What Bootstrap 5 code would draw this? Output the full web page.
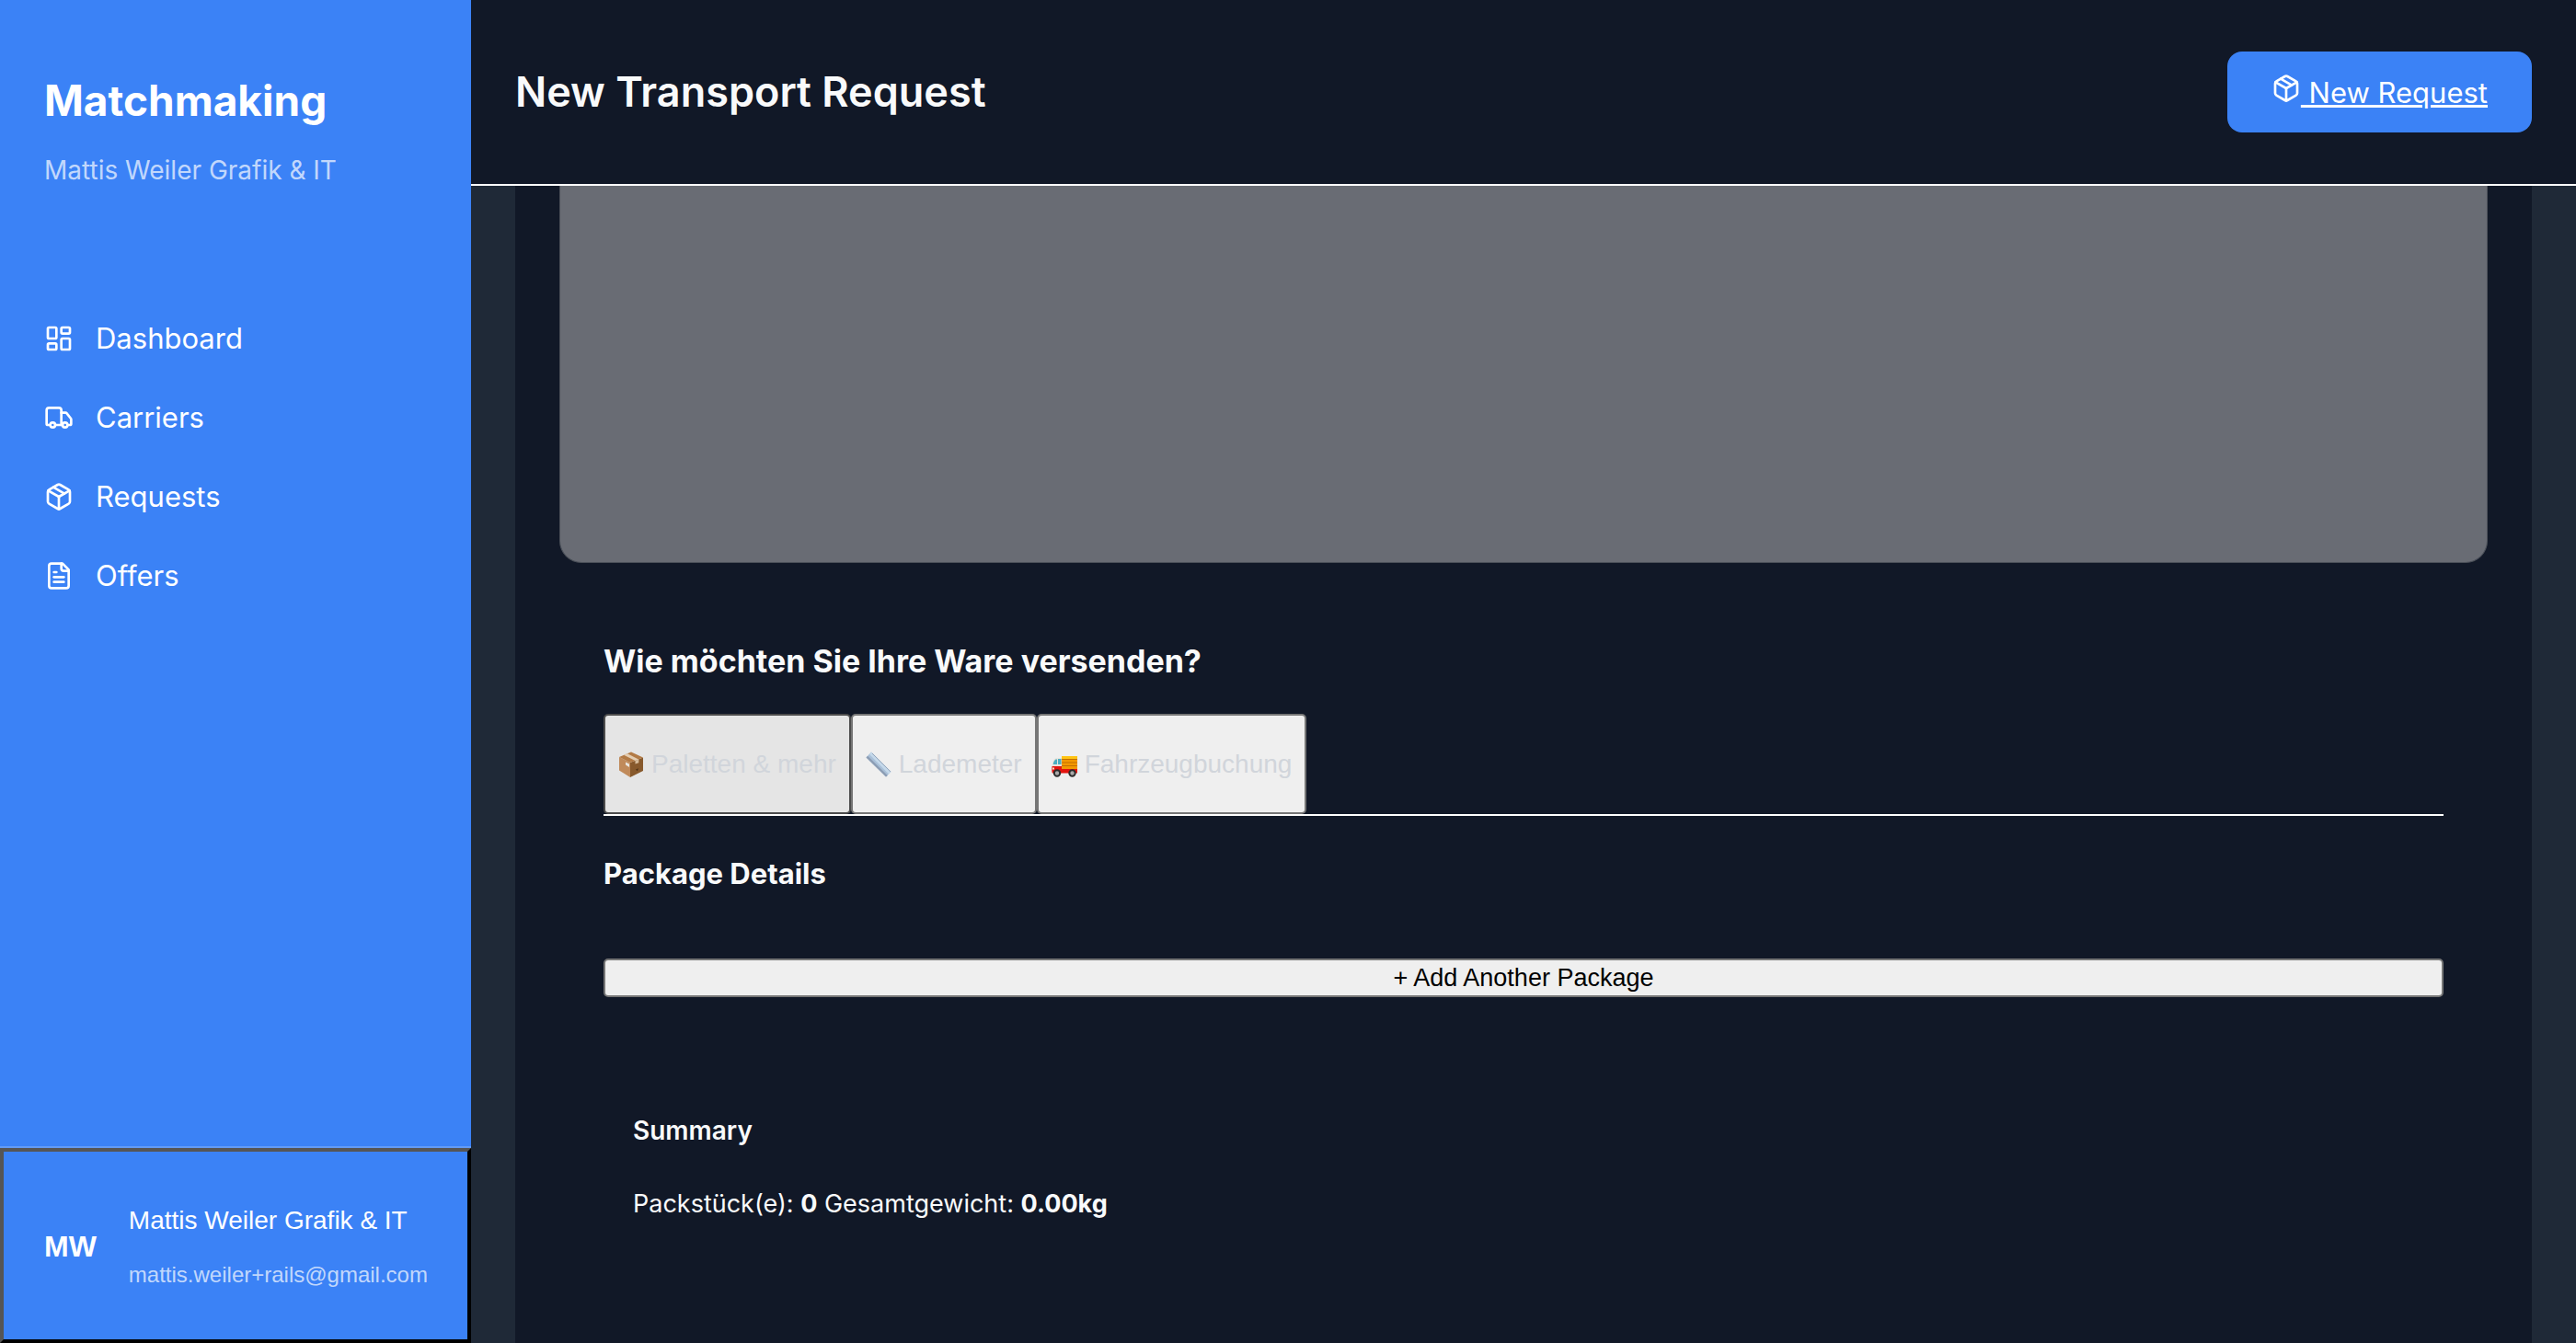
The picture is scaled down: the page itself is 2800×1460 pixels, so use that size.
<!DOCTYPE html>
<html lang="de">
<head>
<meta charset="utf-8">
<meta name="viewport" content="width=device-width, initial-scale=1">
<title>New Transport Request</title>
<link href="https://cdn.jsdelivr.net/npm/bootstrap@5.3.0/dist/css/bootstrap.min.css" rel="stylesheet">
<style>
:root{--brand:#3b82f6;--ink:#111827;--page:#1f2937;--paper:#f9fafb}
body{font-family:Inter,sans-serif;font-size:28px;line-height:40px;color:var(--paper);background:var(--page)}
button{font-family:"Liberation Sans",Arial,sans-serif}
.sidebar{width:512px;background:var(--brand);color:#fff}
.brand-block{padding:80px 48px 0}
.brand-name{font-size:46px;line-height:58px;font-weight:700;margin-bottom:27px}
.muted-text{color:rgba(255,255,255,.7)}
.side-nav{margin-top:120px}
.side-nav .nav-link{padding:24px 48px;gap:24px;font-size:31px;line-height:38px;color:#fff}
.icon{width:32px;height:32px;fill:none;stroke:currentColor;stroke-width:2;stroke-linecap:round;stroke-linejoin:round;flex:none}
.user-area{border-top:2px solid rgba(255,255,255,.2)}
.user-button{height:212px;padding:2px 16px 0 44px;gap:35px;border:4px outset #000;border-color:#555 #000 #000 #555;background:var(--brand);color:#fff}
.user-initials{font-size:32px;font-weight:700}
.user-name{font-size:28px;line-height:44px}
.user-mail{font-size:24px;line-height:38px}
.user-lines{gap:18px}
.topbar{height:202px;padding:0 48px;background:var(--ink);border-bottom:2px solid #fff}
.page-title{font-size:45px;line-height:58px;font-weight:600}
.new-request{padding:24px 48px;border-radius:16px;background:var(--brand);color:#fff;font-size:31px;line-height:39px;text-decoration:underline;text-decoration-thickness:3px;text-underline-offset:2px}
.new-request:hover{color:#fff}
.new-request .icon{vertical-align:baseline}
.request-panel{margin:0 48px;padding:0 48px;background:var(--ink)}
.map-box{height:410px;flex:none;background:#696c74;border:1px solid #4b5059;border-top:0;border-radius:0 0 24px 24px}
.request-form{padding:86px 48px 0}
.form-title{font-size:34px;line-height:42px;font-weight:700;margin-bottom:36px}
.mode-tabs{border-bottom:2px solid #fff;margin-bottom:43px}
.plain-button{border:2px solid #767676;border-radius:5px;background:#efefef;color:#000}
.mode-tab{height:109px;padding:0 14px;gap:8px;font-size:28px;color:#d1d5db}
.mode-tab.active{background:#e5e5e5;border-color:#4c4c4c}
.mode-tab svg{width:28px;height:28px;flex:none}
.section-title{font-size:31px;line-height:40px;font-weight:700;margin-bottom:72px}
.add-button{height:42px;padding:0;font-size:27px;line-height:38px}
.summary-box{padding:125px 32px 48px}
.summary-title{font-size:28px;line-height:40px;font-weight:600;margin-bottom:40px}
.summary-line{font-size:27px}
</style>
</head>
<body>
<svg class="d-none" aria-hidden="true">
  <symbol id="i-box" viewBox="0 0 24 24"><path d="m7.5 4.27 9 5.15"/><path d="M21 8a2 2 0 0 0-1-1.73l-7-4a2 2 0 0 0-2 0l-7 4A2 2 0 0 0 3 8v8a2 2 0 0 0 1 1.73l7 4a2 2 0 0 0 2 0l7-4A2 2 0 0 0 21 16Z"/><path d="m3.3 7 8.7 5 8.7-5"/><path d="M12 22V12"/></symbol>
</svg>
<div class="d-flex vh-100 overflow-hidden">
  <aside class="sidebar d-flex flex-column flex-shrink-0">
    <div class="brand-block">
      <div class="brand-name">Matchmaking</div>
      <div class="muted-text">Mattis Weiler Grafik &amp; IT</div>
    </div>
    <nav class="side-nav nav flex-column">
      <a class="nav-link d-flex align-items-center" href="#">
        <svg class="icon" viewBox="0 0 24 24" aria-hidden="true"><rect x="3" y="3" width="7" height="9" rx="1"/><rect x="14" y="3" width="7" height="5" rx="1"/><rect x="14" y="12" width="7" height="9" rx="1"/><rect x="3" y="16" width="7" height="5" rx="1"/></svg>
        Dashboard</a>
      <a class="nav-link d-flex align-items-center" href="#">
        <svg class="icon" viewBox="0 0 24 24" aria-hidden="true"><path d="M14 18V6a2 2 0 0 0-2-2H4a2 2 0 0 0-2 2v11a1 1 0 0 0 1 1h2"/><path d="M15 18H9"/><path d="M19 18h2a1 1 0 0 0 1-1v-3.65a1 1 0 0 0-.22-.62l-3.48-4.35A1 1 0 0 0 17.52 8H14"/><circle cx="17" cy="18" r="2"/><circle cx="7" cy="18" r="2"/></svg>
        Carriers</a>
      <a class="nav-link d-flex align-items-center" href="#">
        <svg class="icon" aria-hidden="true"><use href="#i-box"/></svg>
        Requests</a>
      <a class="nav-link d-flex align-items-center" href="#">
        <svg class="icon" viewBox="0 0 24 24" aria-hidden="true"><path d="M15 2H6a2 2 0 0 0-2 2v16a2 2 0 0 0 2 2h12a2 2 0 0 0 2-2V7Z"/><path d="M14 2v4a2 2 0 0 0 2 2h4"/><path d="M10 9H8"/><path d="M16 13H8"/><path d="M16 17H8"/></svg>
        Offers</a>
    </nav>
    <div class="user-area mt-auto">
      <button type="button" class="user-button w-100 d-flex align-items-center text-start">
        <span class="user-initials">MW</span>
        <span class="user-lines d-flex flex-column">
          <span class="user-name">Mattis Weiler Grafik &amp; IT</span>
          <span class="user-mail muted-text">mattis.weiler+rails@gmail.com</span>
        </span>
      </button>
    </div>
  </aside>
  <div class="d-flex flex-column flex-grow-1">
    <header class="topbar d-flex align-items-center justify-content-between flex-shrink-0">
      <h1 class="page-title mb-0">New Transport Request</h1>
      <a class="new-request" href="#"><svg class="icon" aria-hidden="true"><use href="#i-box"/></svg> New Request</a>
    </header>
    <main class="request-panel d-flex flex-column flex-grow-1 overflow-hidden">
      <div class="map-box"></div>
      <form class="request-form">
        <h2 class="form-title">Wie möchten Sie Ihre Ware versenden?</h2>
        <div class="mode-tabs d-flex">
          <button type="button" class="plain-button mode-tab active d-flex align-items-center">
            <svg viewBox="0 0 28 28" aria-hidden="true"><path fill="#c08a5a" d="M1 6 13 12V28L1 20.500Z"/><path fill="#87592c" d="M13 12 27 6.500V21L13 28Z"/><path fill="#b27a45" d="M14 .5 27 6.500 13 12 1 6Z"/><path fill="#e3cdb2" d="m6 3.700 3.500-1.600L22 8.500 18.500 9.900Z"/><path fill="#d6bc9c" d="m18.500 9.900 3.800-1.500v3.800l-3.800 1.400Z"/><path fill="#e9e5df" d="m8 11.500 4 2v3.500l-4-2.500Z"/><path fill="#4e3114" d="m19 19.500 3-1.200-1.200 3Z"/></svg>
            Paletten &amp; mehr</button>
          <button type="button" class="plain-button mode-tab d-flex align-items-center">
            <svg viewBox="0 0 28 28" aria-hidden="true"><path fill="#a9c0d8" d="M.5 6.500 6 .5 27.500 22 22 27.500Z"/><path fill="#c4d8ea" d="M4 3 6 .5 27.500 22 25 24.500Z"/><path fill="#8c9db4" d="M.5 6.500 2.200 4.700 23.800 26 22 27.500Z"/><path stroke="#8799b0" stroke-width=".8" d="m7 2 20 20"/></svg>
            Lademeter</button>
          <button type="button" class="plain-button mode-tab d-flex align-items-center">
            <svg viewBox="0 0 28 28" aria-hidden="true"><path fill="#f39800" d="M11 5h17v15H11Z"/><path fill="#ffc414" d="M11 5h17v3H11Z"/><path stroke="#c46f00" d="M11 8.500h17M11 12h17M11 15.500h17"/><path fill="#e8e4dc" d="M5 7h6v9H.5C1 11 2 8 5 7Z"/><path fill="#49aec2" d="M4.500 8.500H6V14H1.700C2 11.500 3 9.500 4.500 8.500ZM7 8h3.500v6H7Z"/><path fill="#e3140f" d="M.5 16H11v3h17v4.500H1Q0 23 .5 16Z"/><path fill="#f8d7c0" d="M1 17.500h2v2H1Z"/><g fill="#a9a9a9" stroke="#2d2d2d" stroke-width="2"><circle cx="6" cy="23.500" r="3.200"/><circle cx="22.500" cy="23.500" r="3.200"/></g></svg>
            Fahrzeugbuchung</button>
        </div>
        <h3 class="section-title">Package Details</h3>
        <button type="button" class="plain-button add-button d-block w-100">+ Add Another Package</button>
        <div class="summary-box">
          <h4 class="summary-title">Summary</h4>
          <p class="summary-line mb-0">Packstück(e): <strong>0</strong> Gesamtgewicht: <strong>0.00kg</strong></p>
        </div>
      </form>
    </main>
  </div>
</div>
<script src="https://cdn.jsdelivr.net/npm/bootstrap@5.3.0/dist/js/bootstrap.bundle.min.js"></script>
</body>
</html>
